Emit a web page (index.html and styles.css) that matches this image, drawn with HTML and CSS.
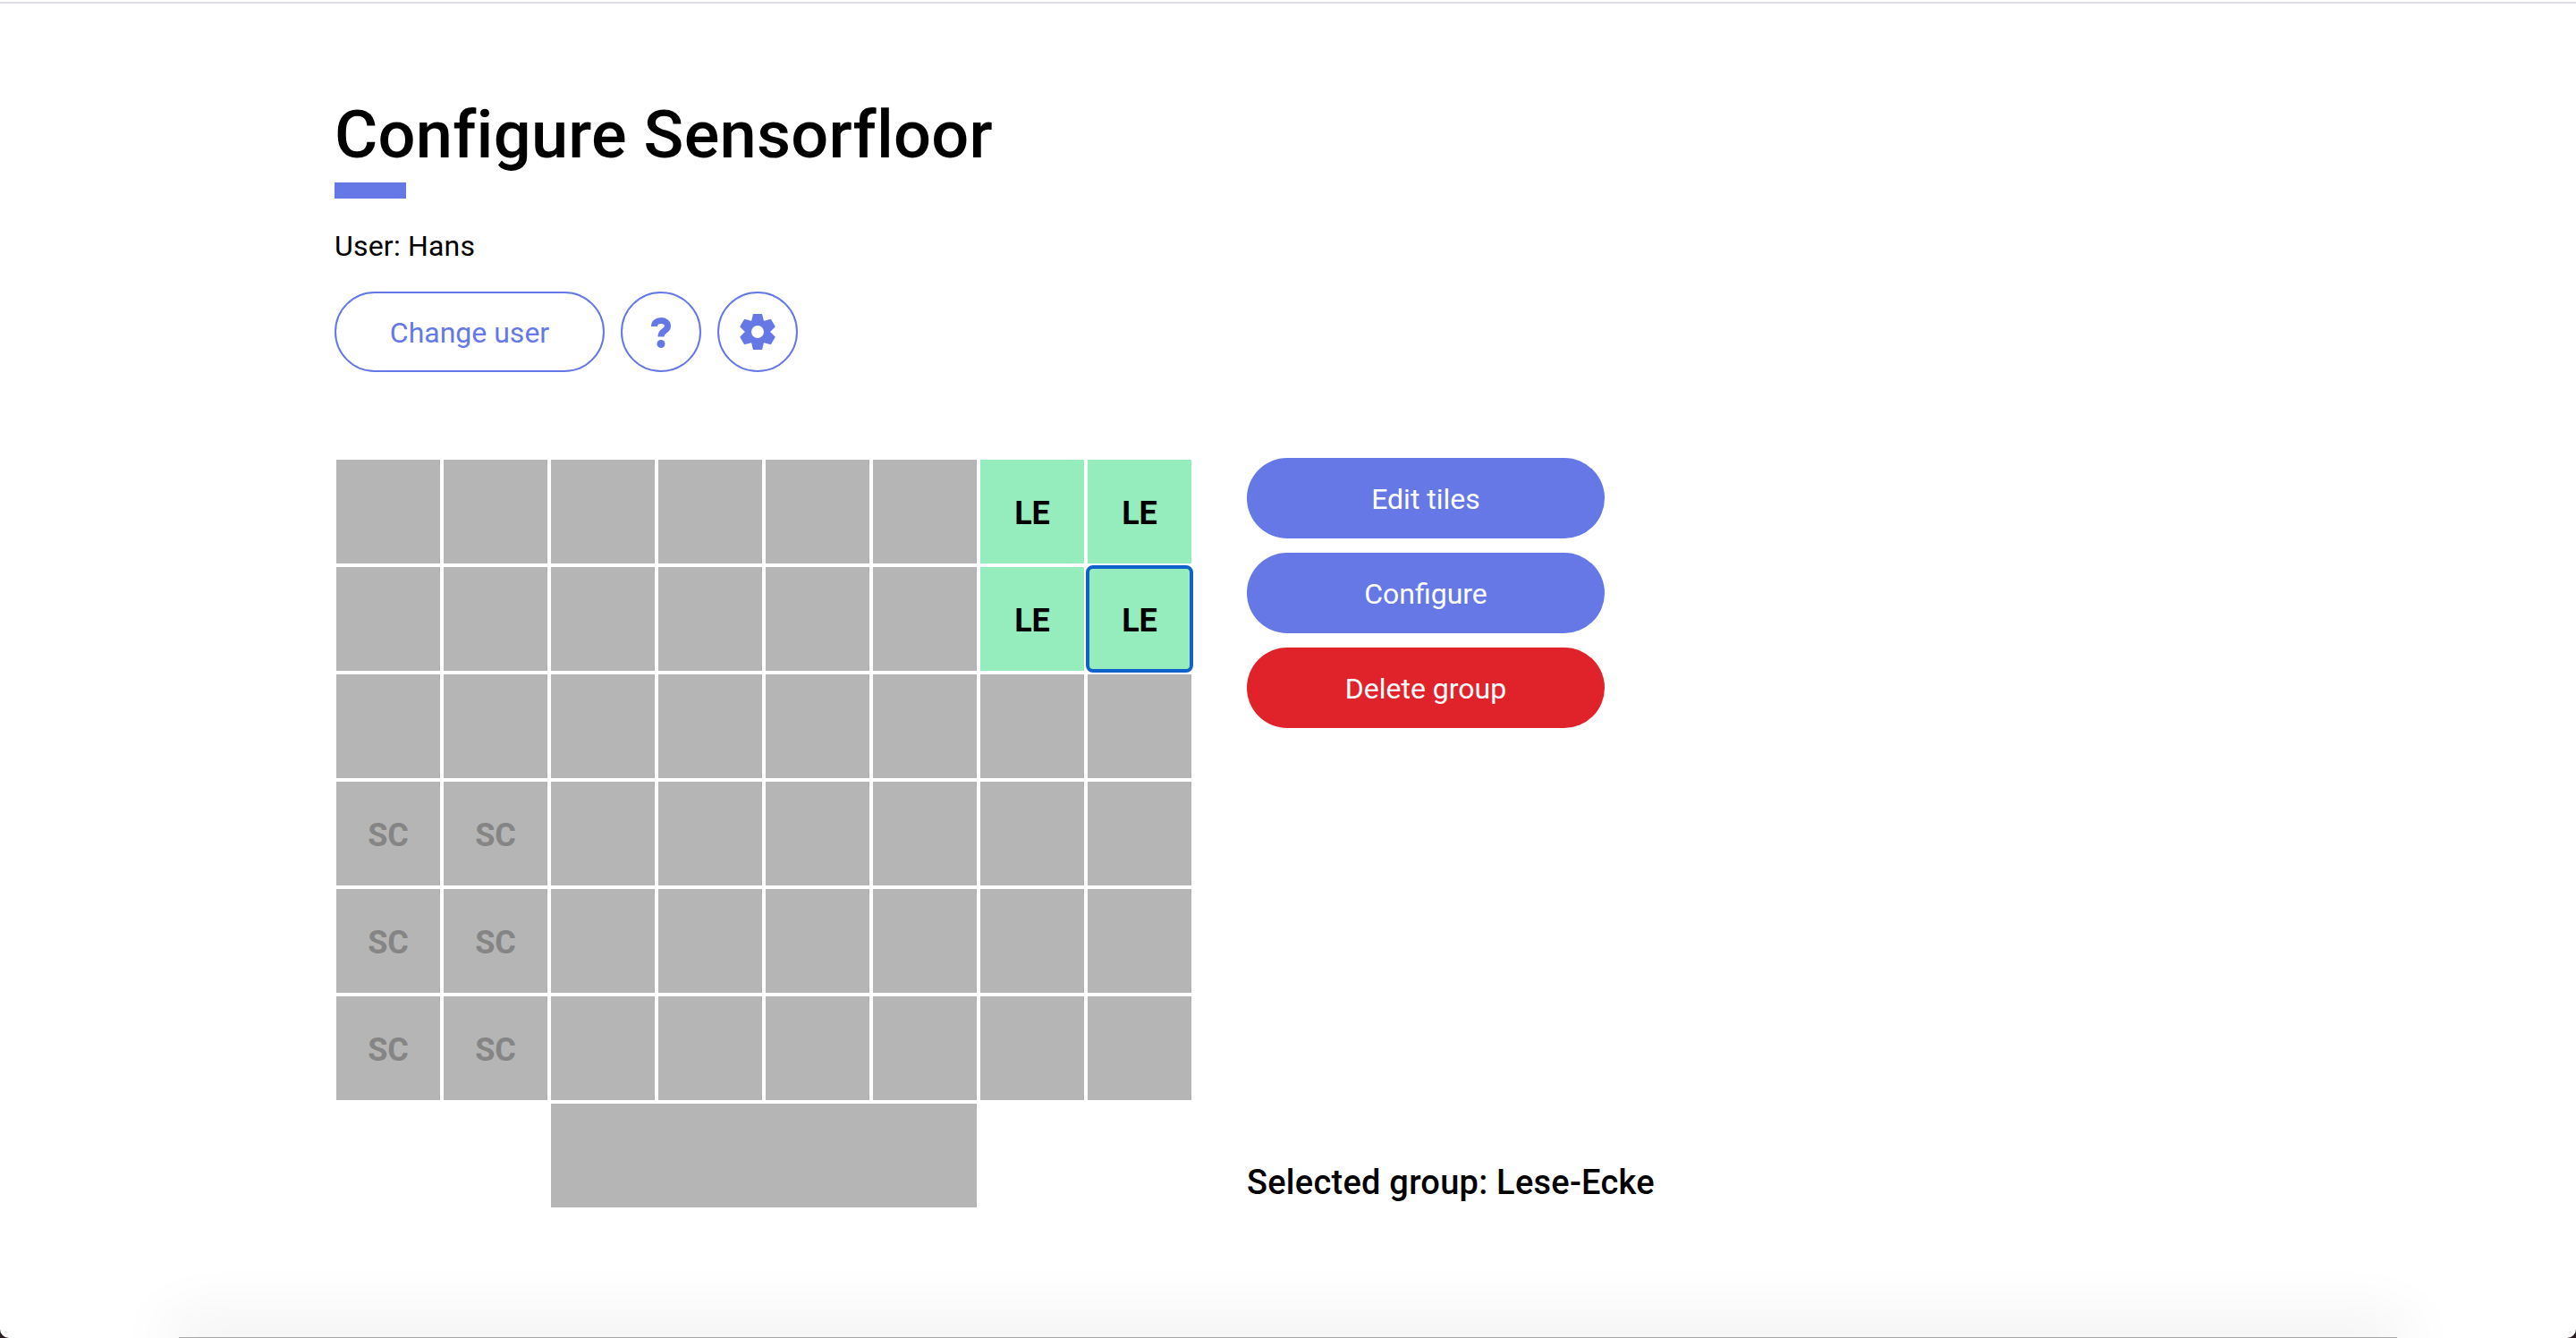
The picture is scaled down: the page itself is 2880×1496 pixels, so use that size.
FILE: index.html
```html
<!DOCTYPE html>
<html lang="en">
<head>
    <meta charset="UTF-8">
    <meta name="viewport" content="width=device-width, initial-scale=1.0">
    <title>Configure Sensorfloor</title>
    <link rel="stylesheet" href="styles.css">
</head>
<body>

    <div class="window-top"></div>

    <main class="page">
        <h1 class="title">Configure Sensorfloor</h1>
        <div class="title-bar"></div>
        <p class="user">User: Hans</p>

        <div class="user-actions">
            <button class="btn-outline btn-change">Change user</button>
            <button class="btn-outline btn-round" aria-label="Help">
                <svg class="icon-help" viewBox="0 0 22 34">
                    <path class="help-hook" d="M3.500 10C3.500 6 6.500 3.500 11 3.500C15.500 3.500 18.500 6 18.500 9.500C18.500 12.500 16.500 14 14.500 15.200C12.500 16.400 11 17.500 11 21.500"/>
                    <circle class="help-dot" cx="11" cy="29.500" r="4.500"/>
                </svg>
            </button>
            <button class="btn-outline btn-round" aria-label="Settings">
                <svg class="icon-gear" viewBox="-20 -20 40 40">
                    <polygon points="-6.500,-14 -5,-20 5,-20 6.500,-14 6.500,14 5,20 -5,20 -6.500,14"/>
                    <polygon points="-6.500,-14 -5,-20 5,-20 6.500,-14 6.500,14 5,20 -5,20 -6.500,14" transform="rotate(60)"/>
                    <polygon points="-6.500,-14 -5,-20 5,-20 6.500,-14 6.500,14 5,20 -5,20 -6.500,14" transform="rotate(120)"/>
                    <circle r="14.500"/>
                    <circle class="gear-hole" r="7"/>
                </svg>
            </button>
        </div>

        <div class="floor-row">
            <div class="floor">
                <div class="tile"></div><div class="tile"></div><div class="tile"></div><div class="tile"></div><div class="tile"></div><div class="tile"></div><div class="tile tile-le">LE</div><div class="tile tile-le">LE</div>
                <div class="tile"></div><div class="tile"></div><div class="tile"></div><div class="tile"></div><div class="tile"></div><div class="tile"></div><div class="tile tile-le">LE</div><div class="tile tile-le tile-selected">LE</div>
                <div class="tile"></div><div class="tile"></div><div class="tile"></div><div class="tile"></div><div class="tile"></div><div class="tile"></div><div class="tile"></div><div class="tile"></div>
                <div class="tile tile-sc">SC</div><div class="tile tile-sc">SC</div><div class="tile"></div><div class="tile"></div><div class="tile"></div><div class="tile"></div><div class="tile"></div><div class="tile"></div>
                <div class="tile tile-sc">SC</div><div class="tile tile-sc">SC</div><div class="tile"></div><div class="tile"></div><div class="tile"></div><div class="tile"></div><div class="tile"></div><div class="tile"></div>
                <div class="tile tile-sc">SC</div><div class="tile tile-sc">SC</div><div class="tile"></div><div class="tile"></div><div class="tile"></div><div class="tile"></div><div class="tile"></div><div class="tile"></div>
                <div class="tile tile-wide"></div>
            </div>

            <div class="side">
                <div class="side-buttons">
                    <button class="btn-solid">Edit tiles</button>
                    <button class="btn-solid">Configure</button>
                    <button class="btn-solid btn-danger">Delete group</button>
                </div>
                <p class="selected-group">Selected group: Lese-Ecke</p>
            </div>
        </div>
    </main>

    <div class="window-shadow"></div>
    <div class="corner corner-left"></div>
    <div class="corner corner-right"></div>

</body>
</html>
```

FILE: styles.css
```css
/* Global Styles */
html, body {
    height: 100%;
}

body {
    font-family: 'Roboto', 'Liberation Sans', sans-serif;
    margin: 0;
    background-color: #fff;
    color: #000;
    overflow: hidden;
    position: relative;
}

.window-top {
    height: 2px;
    margin-top: 2px;
    background-color: #dcdce2;
}

.page {
    padding: 100px 0 0 374px;
}

/* Header */
.title {
    font-size: 74px;
    font-weight: 500;
    line-height: 94px;
    margin: 0;
    letter-spacing: 0.25px;
}

.title-bar {
    width: 80px;
    height: 18px;
    margin-top: 6px;
    background-color: #6578e6;
}

.user {
    font-size: 32px;
    line-height: 40px;
    margin: 33px 0 0;
    letter-spacing: 0.2px;
}

.user-actions {
    display: flex;
    gap: 18px;
    margin-top: 31px;
}

/* Buttons */
button {
    font-family: inherit;
    cursor: pointer;
}

.btn-outline {
    height: 90px;
    background: #fff;
    border: 2px solid #6578e6;
    border-radius: 45px;
    color: #6578e6;
    font-size: 32px;
    padding: 0;
    display: flex;
    align-items: center;
    justify-content: center;
}

.btn-change {
    width: 302px;
    padding-top: 2px;
}

.btn-round {
    width: 90px;
}

.icon-help {
    width: 22px;
    height: 34px;
    margin-top: 2px;
}

.help-hook {
    fill: none;
    stroke: #6578e6;
    stroke-width: 7;
}

.help-dot {
    fill: #6578e6;
}

.icon-gear {
    width: 40px;
    height: 40px;
    fill: #6578e6;
}

.gear-hole {
    fill: #fff;
}

.btn-solid {
    width: 400px;
    height: 90px;
    border: none;
    border-radius: 45px;
    padding: 2px 0 0;
    background-color: #6578e6;
    color: #fff;
    font-size: 32px;
}

.btn-danger {
    background-color: #e0232b;
}

/* Floor */
.floor-row {
    display: flex;
    gap: 62px;
    margin-top: 98px;
}

.floor {
    display: grid;
    grid-template-columns: repeat(8, 116px);
    grid-auto-rows: 116px;
    gap: 4px;
    margin-left: 2px;
}

.tile {
    background-color: #b5b5b5;
    display: flex;
    align-items: center;
    justify-content: center;
    padding-top: 4px;
    box-sizing: border-box;
    font-size: 36px;
    font-weight: 700;
}

.tile-le {
    background-color: #95edbd;
}

.tile-sc {
    color: #858585;
}

.tile-selected {
    outline: 4px solid #0f62c9;
    outline-offset: -2px;
    border-radius: 6px;
}

.tile-wide {
    grid-column: 3 / 7;
}

/* Side column */
.side {
    display: flex;
    flex-direction: column;
    justify-content: space-between;
    margin-top: -2px;
}

.side-buttons {
    display: flex;
    flex-direction: column;
    gap: 16px;
}

.selected-group {
    font-size: 38px;
    font-weight: 500;
    line-height: 48px;
    margin: 0 0 4px;
    letter-spacing: 0.25px;
}

/* Window edge */
.window-shadow {
    position: absolute;
    left: 200px;
    right: 200px;
    bottom: 0;
    height: 1px;
    background-color: rgba(0, 0, 0, 0.35);
    box-shadow: 0 0 70px 10px rgba(0, 0, 0, 0.14);
}

.corner {
    position: absolute;
    bottom: 0;
    width: 10px;
    height: 10px;
    overflow: hidden;
}

.corner::before {
    content: "";
    position: absolute;
    width: 20px;
    height: 20px;
    border-radius: 50%;
    box-shadow: 0 0 0 10px #2a2024;
    bottom: 0;
}

.corner-left {
    left: 0;
}

.corner-right {
    right: 0;
}

.corner-right::before {
    right: 0;
}
```
